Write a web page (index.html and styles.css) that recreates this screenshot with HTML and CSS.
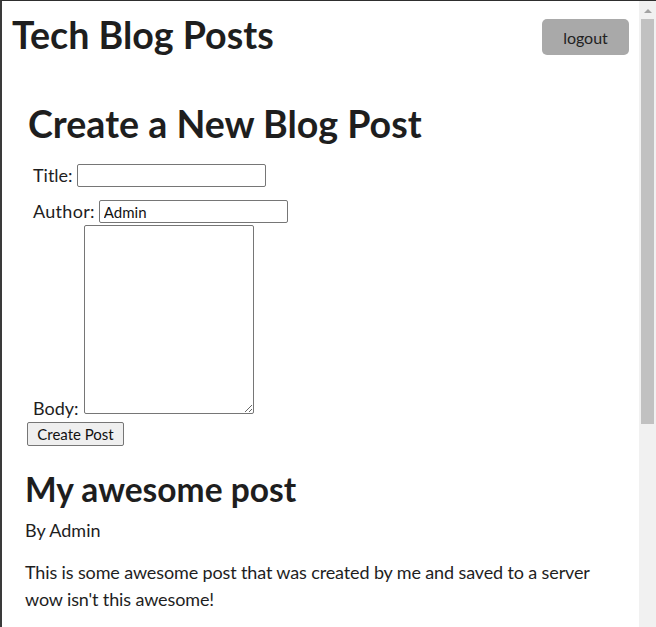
FILE: index.html
```html
<!DOCTYPE html>
<html lang="en">
<head>
<meta charset="utf-8">
<title>Tech Blog Posts</title>
<link rel="stylesheet" href="styles.css">
</head>
<body>
<div class="frame">
  <div class="page">
    <header class="topbar">
      <h1 class="site-title">Tech Blog Posts</h1>
      <button class="logout" type="button">logout</button>
    </header>

    <section class="create">
      <h2 class="create-title">Create a New Blog Post</h2>
      <form class="post-form">
        <div class="row row-title">
          <label class="lbl" for="title">Title:</label>
          <input class="field" id="title" type="text">
        </div>
        <div class="row row-author">
          <label class="lbl" for="author">Author:</label>
          <input class="field" id="author" type="text" value="Admin">
        </div>
        <div class="row row-body">
          <label class="lbl" for="body">Body:</label>
          <textarea class="area" id="body"></textarea>
        </div>
        <button class="submit" type="button">Create Post</button>
      </form>
    </section>

    <article class="post">
      <h3 class="post-title">My awesome post</h3>
      <p class="post-author">By Admin</p>
      <p class="post-body">This is some awesome post that was created by me and saved to a server wow isn't this awesome!</p>
    </article>
  </div>
  <div class="scrollbar">
    <div class="sb-up"></div>
    <div class="sb-thumb"></div>
  </div>
</div>
</body>
</html>
```

FILE: styles.css
```css
html, body {
  margin: 0;
  padding: 0;
  height: 100%;
  overflow: hidden;
  background: #ffffff;
}

.frame {
  display: flex;
  height: 627px;
  box-sizing: border-box;
  border-top: 1px solid #2e2e2e;
  border-left: 2px solid #3a3a3a;
  font-family: Lato, "Open Sans", sans-serif;
  color: #1e1e1e;
}

.page {
  flex: 1;
  overflow: hidden;
  padding: 0 10px 0 10px;
}

.topbar {
  display: flex;
  justify-content: space-between;
  align-items: flex-start;
}

.site-title {
  margin: 12px 0 0 0;
  font-size: 37.6px;
  line-height: 44px;
  font-weight: 700;
}

.logout {
  margin-top: 18px;
  width: 87px;
  height: 36px;
  border: none;
  border-radius: 5px;
  background: #a9a9a9;
  color: #222;
  font-family: Lato, "Open Sans", sans-serif;
  font-size: 16px;
  padding: 0;
}

.create {
  padding-left: 15px;
}

.create-title {
  margin: 45px 0 0 1px;
  font-size: 37.6px;
  line-height: 44px;
  font-weight: 700;
}

.post-form {
  margin-top: 16px;
}

.row {
  display: flex;
  align-items: center;
  padding-left: 6px;
  font-size: 18px;
  line-height: 27px;
}

.row-title {
  margin-bottom: 9px;
}

.row-body {
  align-items: flex-end;
}

.lbl {
  margin-right: 4px;
}

.row-author .lbl {
  letter-spacing: 0.3px;
}

.field {
  box-sizing: border-box;
  width: 189px;
  height: 23px;
  border: 1px solid #767676;
  border-radius: 2px;
  padding: 1px 4px;
  font-family: Lato, "Open Sans", sans-serif;
  font-size: 15px;
  color: #111;
}

.area {
  box-sizing: border-box;
  width: 170px;
  height: 189px;
  border: 1px solid #767676;
  border-radius: 2px;
  resize: both;
  font-family: Lato, sans-serif;
  margin-left: 1px;
}

.row-body .lbl {
  line-height: 20px;
  margin-bottom: -4px;
}

.submit {
  margin-top: 8px;
  box-sizing: border-box;
  width: 97px;
  height: 24px;
  border: 1px solid #767676;
  border-radius: 2px;
  background: #efefef;
  color: #111;
  font-family: Lato, "Open Sans", sans-serif;
  font-size: 15px;
  padding: 0;
}

.post {
  padding-left: 13px;
}

.post-title {
  margin: 23px 0 0 0;
  font-size: 33.5px;
  line-height: 40px;
  font-weight: 700;
}

.post-author {
  margin: 8px 0 0 0;
  font-size: 18px;
  line-height: 27px;
}

.post-body {
  margin: 15px 0 0 0;
  font-size: 18px;
  line-height: 27px;
  letter-spacing: -0.13px;
  width: 580px;
}

.scrollbar {
  width: 17px;
  flex: 0 0 17px;
  background: #f1f1f1;
  display: flex;
  flex-direction: column;
  align-items: center;
}

.sb-up {
  margin-top: 8px;
  width: 0;
  height: 0;
  border-left: 4px solid transparent;
  border-right: 4px solid transparent;
  border-bottom: 4px solid #a3a3a3;
}

.sb-thumb {
  margin-top: 6px;
  width: 13px;
  height: 405px;
  background: #c1c1c1;
}
```
